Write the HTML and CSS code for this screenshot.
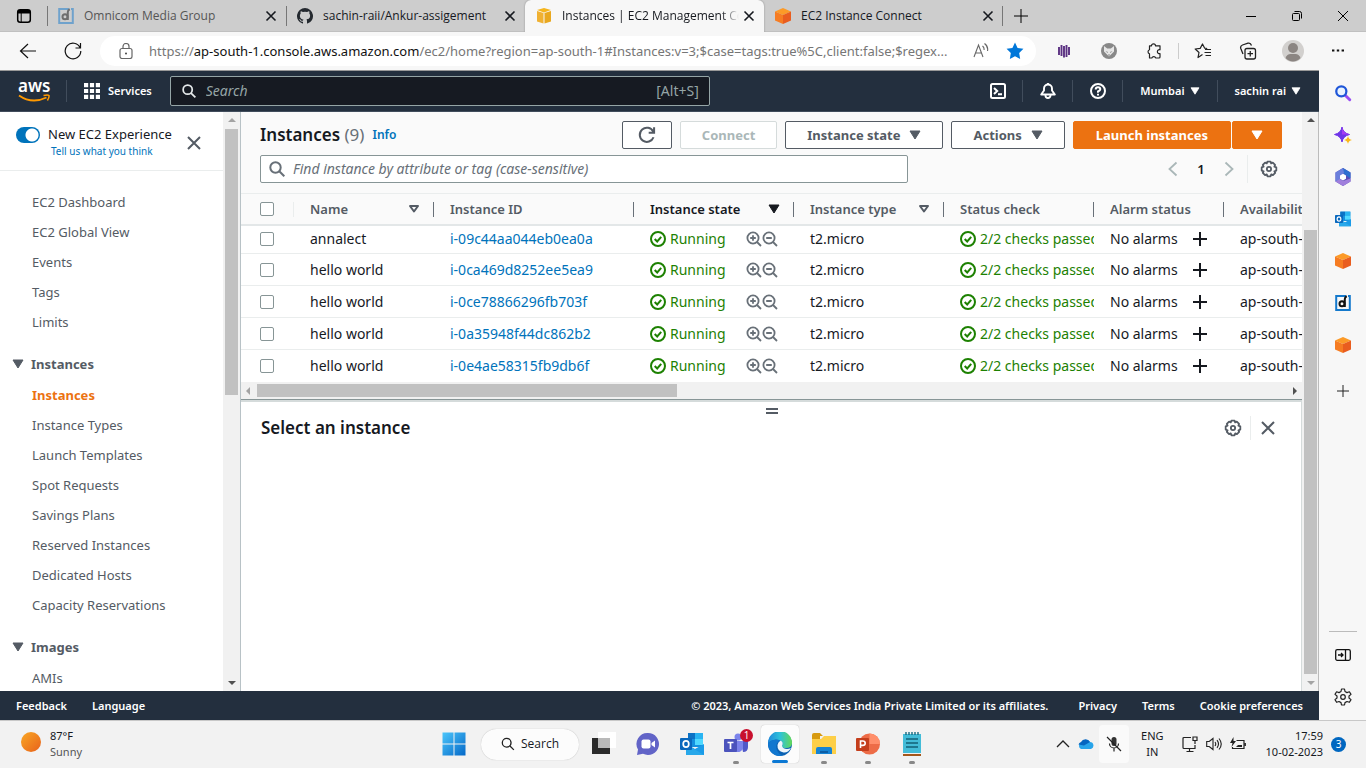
FILE: index.html
```html
<!DOCTYPE html>
<html lang="en">
<head>
<meta charset="utf-8">
<title>Instances | EC2 Management Console</title>
<link rel="stylesheet" href="styles.css">
</head>
<body>
<svg class="defs" aria-hidden="true">
  <symbol id="x" viewBox="0 0 16 16"><path d="M3.5 3.5l9 9M12.500 3.500l-9 9" fill="none" stroke="currentColor" stroke-width="1.600"/></symbol>
  <symbol id="close" viewBox="0 0 16 16"><path d="M2 2l12 12M14 2L2 14" fill="none" stroke="currentColor" stroke-width="2"/></symbol>
  <symbol id="down" viewBox="0 0 12 10"><path d="M1 1h10L6 9z" fill="currentColor" stroke="currentColor" stroke-linejoin="round"/></symbol>
  <symbol id="sort" viewBox="0 0 12 10"><path d="M2 2h8L6 7.500z" fill="none" stroke="currentColor" stroke-width="2" stroke-linejoin="round"/></symbol>
  <symbol id="search" viewBox="0 0 16 16"><circle cx="6.500" cy="6.500" r="5.200" fill="none" stroke="currentColor" stroke-width="2"/><path d="M10.300 10.300l5 5" stroke="currentColor" stroke-width="2"/></symbol>
  <symbol id="ok" viewBox="0 0 16 16"><g fill="none" stroke="currentColor" stroke-width="2"><circle cx="8" cy="8" r="7"/><path d="M4.700 8l2.500 2.500 4-4.600"/></g></symbol>
  <symbol id="zin" viewBox="0 0 16 16"><g fill="none" stroke="currentColor" stroke-width="1.800"><circle cx="7" cy="7" r="5.600"/><path d="M11 11l4 4M4.200 7h5.600M7 4.200v5.600"/></g></symbol>
  <symbol id="zout" viewBox="0 0 16 16"><g fill="none" stroke="currentColor" stroke-width="1.800"><circle cx="7" cy="7" r="5.600"/><path d="M11 11l4 4M4.200 7h5.600"/></g></symbol>
  <symbol id="plus" viewBox="0 0 16 16"><path d="M8 1v14M1 8h14" stroke="currentColor" stroke-width="2"/></symbol>
  <symbol id="gear" viewBox="0 0 16 16"><path d="M6.600 1h2.800l.5 1.600 1.500-.6 2 2-.6 1.500 1.700.6v2.900l-1.700.6.7 1.500-2 2-1.500-.7-.6 1.700H6.600L6 12.400l-1.500.7-2-2 .7-1.500L1.500 9V6.100l1.700-.6-.7-1.500 2-2 1.500.6z" transform="translate(0 .4)" fill="none" stroke="currentColor" stroke-width="1.600" stroke-linejoin="round"/><circle cx="8" cy="8" r="1.900" fill="none" stroke="currentColor" stroke-width="1.600"/></symbol>
  <symbol id="cube" viewBox="0 0 16 16"><path d="M8 0l8 3.600L8 7 0 3.600z" fill="#fc9a27"/><path d="M0 3.600L8 7v9l-8-3.600z" fill="#f67c22"/><path d="M16 3.600L8 7v9l8-3.600z" fill="#e95d1f"/></symbol>
  <symbol id="dlogo" viewBox="0 0 16 16"><path d="M11 1H1.200v14h13.600V1H13" fill="none" stroke="#1479cc" stroke-width="2"/><g fill="none" stroke="#111" stroke-width="2"><circle cx="7" cy="8.700" r="2.500"/><path d="M9.800 12V4q0-2 2-2.800"/></g></symbol>
  <symbol id="outlook" viewBox="0 0 24 24"><path d="M8 1h15v14H8z" fill="#1490df"/><path d="M8 1h7v6H8z" fill="#0c72c5"/><path d="M15 1h8v6h-8z" fill="#29b4f2"/><path d="M15 7h8v6h-8z" fill="#50d9ff"/><path d="M6 12l9 5 9-5v11H6z" fill="#1a9be8"/><path d="M6 12v11h18z" fill="#28a8ea"/><rect y="6" width="12" height="12" rx="1" fill="#0a68bd"/><ellipse cx="6" cy="12" rx="2.800" ry="3.200" fill="none" stroke="#fff" stroke-width="1.700"/></symbol>
</svg>

<header class="tabs">
  <button class="tab-menu" aria-label="Tab actions"><svg viewBox="0 0 16 16"><rect x="1.700" y="1.700" width="12.600" height="12.600" rx="2.500" fill="none" stroke="#000" stroke-width="1.500"/><path d="M2 2h12v3.500H2z"/><path d="M5.200 5v9" stroke="#000"/></svg></button>
  <div class="tab rule-left dim"><svg class="fav"><use href="#dlogo"/></svg><span>Omnicom Media Group</span><button aria-label="Close tab"><svg><use href="#x"/></svg></button></div>
  <div class="tab rule-left"><svg class="fav" viewBox="0 0 16 16"><path d="M8 0a8 8 0 0 0-2.500 15.600c.4.100.5-.2.500-.4v-1.500c-2.200.5-2.700-.9-2.700-.9-.4-.9-.9-1.200-.9-1.200-.7-.5.1-.5.100-.5.800.1 1.200.8 1.200.8.700 1.200 1.900.9 2.300.7.100-.5.300-.9.500-1.100-1.800-.2-3.600-.9-3.600-4 0-.9.300-1.600.8-2.100-.1-.2-.4-1 .1-2.100 0 0 .7-.2 2.200.8a7.500 7.500 0 0 1 4 0c1.500-1 2.200-.8 2.200-.8.400 1.100.2 1.900.1 2.100.5.600.8 1.300.8 2.100 0 3.100-1.900 3.700-3.700 3.900.3.300.6.800.6 1.500v2.300c0 .2.100.5.500.4A8 8 0 0 0 8 0z" fill="#24292f"/></svg><span>sachin-raii/Ankur-assigement</span><button aria-label="Close tab"><svg><use href="#x"/></svg></button></div>
  <div class="tab active"><svg class="fav" viewBox="0 0 16 16"><path d="M8 0l7 2-7 2.500L1 2z" fill="#f5b51d"/><path d="M1 3l6.500 2v10.500L1 13.500z" fill="#f0b132"/><path d="M15 3L8.500 5v10.500l6.500-2z" fill="#e9a81f"/></svg><span class="fade">Instances | EC2 Management Console</span><button aria-label="Close tab"><svg><use href="#x"/></svg></button></div>
  <div class="tab rule-right"><svg class="fav"><use href="#cube"/></svg><span>EC2 Instance Connect</span><button aria-label="Close tab"><svg><use href="#x"/></svg></button></div>
  <button class="new-tab" aria-label="New tab"><svg viewBox="0 0 16 16"><path d="M8 1v14M1 8h14" stroke="#000"/></svg></button>
  <div class="window-buttons">
    <button aria-label="Minimize"><svg viewBox="0 0 12 12"><path d="M1 6.500h10" stroke="#000"/></svg></button>
    <button aria-label="Restore"><svg viewBox="0 0 12 12"><g fill="none" stroke="#000"><rect x="1.500" y="3.500" width="7" height="7" rx="1"/><path d="M3.500 1.500h5a2 2 0 0 1 2 2v5"/></g></svg></button>
    <button aria-label="Close"><svg viewBox="0 0 12 12"><path d="M1 1l10 10M11 1L1 11" stroke="#000"/></svg></button>
  </div>
</header>

<div class="toolbar">
  <button aria-label="Back"><svg class="i18" viewBox="0 0 18 18"><path d="M17 9H1.500M9 2L1.500 9 9 16" fill="none" stroke="#111" stroke-width="1.200"/></svg></button>
  <button aria-label="Refresh"><svg class="i18" viewBox="0 0 18 18"><path d="M16 5.500A7.800 7.800 0 1 0 16.800 9M16.500 1v5H11.500" fill="none" stroke="#111" stroke-width="1.200"/></svg></button>
  <div class="address">
    <svg class="i16" viewBox="0 0 16 16"><g fill="none" stroke="#666" stroke-width="1.200"><rect x="2" y="5.500" width="12" height="10" rx="2"/><path d="M5 5.500V3.500a3 3 0 0 1 6 0v2"/></g><circle cx="8" cy="10.500" r="1" fill="#444"/></svg>
    <div class="url" role="textbox" aria-label="Address">https://<b>ap-south-1.console.aws.amazon.com</b>/ec2/home?region=ap-south-1#Instances:v=3;$case=tags:true%5C,client:false;$regex...</div>
    <svg class="i16" viewBox="0 0 16 16"><path d="M1 14L5.500 2 10 14M2.600 10h5.800M9.500 3q2 1.500 1.500 4M11.500.5q4 3 3 7.500" fill="none" stroke="#666" stroke-width="1.100"/></svg>
    <svg class="i18" viewBox="0 0 16 16"><path d="M8 .5l2.300 4.900 5.200.7-3.800 3.700.9 5.400L8 12.600l-4.600 2.600.9-5.400L.5 6.100l5.200-.7z" fill="#0077d9"/></svg>
  </div>
  <button aria-label="Voice extension"><svg class="i14" viewBox="0 0 14 14"><path d="M2 3v8M4.500 1v11M7 2v11.500M9.500 1v12M12 3v8" stroke="#5b3182" stroke-width="1.900"/></svg></button>
  <button aria-label="Fox extension"><svg class="i16" viewBox="0 0 16 16"><circle cx="8" cy="8" r="8" fill="#888"/><path d="M3 3l3.200 2.500h3.600L13 3v5.500L8 13.500 3 8.500z" fill="#e6e6e6"/><path d="M4.500 8l2.500 1-.5 1zM11.500 8L9 9l.5 1zM8 11l1 1-1 1-1-1z" fill="#888"/></svg></button>
  <button aria-label="Extensions"><svg class="i16" viewBox="0 0 16 16"><path d="M5.500 2.800a2 2 0 0 1 4 0H14v4a2 2 0 1 0 0 3.800V14a1 1 0 0 1-1 1H9.800a2.200 2.200 0 0 0-4 0H3.500V10.800a2.100 2.100 0 0 1 0-4v-4z" fill="none" stroke="#222" stroke-width="1.200" stroke-linejoin="round"/></svg></button>
  <i class="sep"></i>
  <button aria-label="Favorites"><svg class="i18" viewBox="0 0 18 16"><path d="M8.500 11.500L4 14.500l1-5L1.200 6l5-.6L8.500 1l2.200 4.200 2.500.3M11 6.500h6M10.500 9.500H17M11.500 12.500H17" fill="none" stroke="#222" stroke-width="1.200" stroke-linejoin="round"/></svg></button>
  <button aria-label="Collections"><svg class="i18" viewBox="0 0 18 18"><g fill="none" stroke="#222" stroke-width="1.300"><rect x="6" y="6.500" width="10.500" height="10.500" rx="2"/><path d="M11.250 9v5.500M8.500 11.700H14M4 12L1.800 6.500Q1 4 3.500 3L9 1.200q2.500-.7 3.500 2.300"/></g></svg></button>
  <button aria-label="Profile"><svg class="i22" viewBox="0 0 22 22"><circle cx="11" cy="11" r="11" fill="#d2d0ce"/><circle cx="11" cy="8" r="5" fill="#8b8582"/><path d="M3.500 18q1.500-4 5-4h5q3.500 0 5 4a10 10 0 0 1-15 0z" fill="#8b8582"/></svg></button>
  <button aria-label="More"><svg class="i14" viewBox="0 0 14 14"><path d="M1 6.500h2.400M5.800 6.500h2.400M10.600 6.500H13" stroke="#111" stroke-width="2"/></svg></button>
</div>

<div class="middle">
  <div class="console">
    <header class="aws-bar">
      <a class="aws-logo" href="#" aria-label="AWS home"><span>aws</span><svg viewBox="0 0 34 9"><path d="M1 1.500Q14 10.500 28.500 3.500" fill="none" stroke="#f90" stroke-width="1.900"/><path d="M25.500 1.500q4.500-1 5.500 0 .4 2-1.600 5" fill="none" stroke="#f90" stroke-width="1.500"/></svg></a>
      <button class="services"><svg class="i16" viewBox="0 0 16 16"><path d="M0 2.200h16M0 8h16M0 13.800h16" stroke="#fff" stroke-width="4.200" stroke-dasharray="4.200 1.700"/></svg>Services</button>
      <label class="aws-search"><svg class="i14"><use href="#search"/></svg><input type="search" placeholder="Search" aria-label="Search AWS"><span>[Alt+S]</span></label>
      <nav class="aws-tools">
        <button class="tool" aria-label="CloudShell"><svg class="i16" viewBox="0 0 16 16"><g fill="none" stroke="#fff" stroke-width="2"><rect x="1" y="1" width="14" height="14" rx="1.500"/><path d="M4 5l3.200 3L4 11M8 11.200h4"/></g></svg></button>
        <button class="tool" aria-label="Notifications"><svg class="i16" viewBox="0 0 16 16"><g fill="none" stroke="#fff" stroke-width="1.900" stroke-linejoin="round"><path d="M1.200 11.500L4 7.500V5.500a4 4 0 0 1 8 0v2l2.800 4zM8 0v2"/><path d="M5.500 12v.5a2.500 2.500 0 0 0 5 0V12"/></g></svg></button>
        <button class="tool" aria-label="Help"><svg class="i16" viewBox="0 0 16 16"><g fill="none" stroke="#fff" stroke-width="2"><circle cx="8" cy="8" r="7"/><path d="M5.700 6.500Q5.700 4.300 8 4.300T10.300 6.300Q10.300 7.500 8 8.500V9.700M8 10.800v1.700"/></g></svg></button>
        <button class="menu">Mumbai<svg class="caret"><use href="#down"/></svg></button>
        <button class="menu">sachin rai<svg class="caret"><use href="#down"/></svg></button>
      </nav>
    </header>

    <div class="aws-body">
      <aside class="side">
        <div class="promo">
          <input type="checkbox" role="switch" id="exp" checked>
          <div><label for="exp">New EC2 Experience</label><a href="#">Tell us what you think</a></div>
          <button aria-label="Close navigation"><svg class="i16"><use href="#close"/></svg></button>
        </div>
        <nav class="links">
          <ul>
            <li><a href="#">EC2 Dashboard</a></li><li><a href="#">EC2 Global View</a></li><li><a href="#">Events</a></li><li><a href="#">Tags</a></li><li><a href="#">Limits</a></li>
          </ul>
          <button class="group"><svg class="caret"><use href="#down"/></svg>Instances</button>
          <ul>
            <li><a class="current" href="#">Instances</a></li><li><a href="#">Instance Types</a></li><li><a href="#">Launch Templates</a></li><li><a href="#">Spot Requests</a></li><li><a href="#">Savings Plans</a></li><li><a href="#">Reserved Instances</a></li><li><a href="#">Dedicated Hosts</a></li><li><a href="#">Capacity Reservations</a></li>
          </ul>
          <button class="group"><svg class="caret"><use href="#down"/></svg>Images</button>
          <ul><li><a href="#">AMIs</a></li></ul>
        </nav>
      </aside>
      <div class="vbar"><i class="up faint"></i><b class="thumb side-thumb"></b><i class="down"></i></div>

      <main class="main">
        <section class="list">
          <div class="list-head">
            <div class="title-row">
              <h1>Instances <span>(9)</span></h1><a class="info" href="#">Info</a>
              <div class="actions">
                <button class="btn refresh" aria-label="Refresh list"><svg class="i18" viewBox="0 0 16 16"><path d="M13.800 10A6.300 6.300 0 1 1 13.500 5M14.300 1v5H9.500" fill="none" stroke="currentColor" stroke-width="1.800"/></svg></button>
                <button class="btn" disabled>Connect</button>
                <button class="btn">Instance state<svg class="caret"><use href="#down"/></svg></button>
                <button class="btn">Actions<svg class="caret"><use href="#down"/></svg></button>
                <div class="split"><button class="btn primary">Launch instances</button><button class="btn primary more" aria-label="More launch options"><svg class="caret"><use href="#down"/></svg></button></div>
              </div>
            </div>
            <div class="filter-row">
              <label class="find"><svg class="i16"><use href="#search"/></svg><input type="search" placeholder="Find instance by attribute or tag (case-sensitive)" aria-label="Find instance"></label>
              <div class="pager">
                <button aria-label="Previous page"><svg class="i16" viewBox="0 0 16 16"><path d="M11.500 1.500L4.500 8l7 6.500" fill="none" stroke="#aab7b8" stroke-width="1.800"/></svg></button>
                <button class="page">1</button>
                <button aria-label="Next page"><svg class="i16" viewBox="0 0 16 16"><path d="M4.500 1.500L11.500 8l-7 6.500" fill="none" stroke="#aab7b8" stroke-width="1.800"/></svg></button>
                <button class="prefs" aria-label="Preferences"><svg class="i18"><use href="#gear"/></svg></button>
              </div>
            </div>
          </div>
          <div class="table-wrap">
            <table>
              <colgroup><col class="c-check"><col class="c-name"><col class="c-id"><col class="c-state"><col class="c-type"><col class="c-status"><col class="c-alarm"><col class="c-zone"></colgroup>
              <thead><tr>
                <th><input type="checkbox" aria-label="Select all"></th>
                <th><div>Name<svg class="caret"><use href="#sort"/></svg></div></th>
                <th><div>Instance ID</div></th>
                <th class="sorted"><div>Instance state<svg class="caret"><use href="#down"/></svg></div></th>
                <th><div>Instance type<svg class="caret"><use href="#sort"/></svg></div></th>
                <th><div>Status check</div></th>
                <th><div>Alarm status</div></th>
                <th><div>Availability Zone</div></th>
              </tr></thead>
              <tbody>
                <tr><td><input type="checkbox" aria-label="Select annalect"></td><td>annalect</td><td><a href="#">i-09c44aa044eb0ea0a</a></td><td><div class="state"><svg><use href="#ok"/></svg>Running<span><svg><use href="#zin"/></svg><svg><use href="#zout"/></svg></span></div></td><td>t2.micro</td><td><div class="state"><svg><use href="#ok"/></svg>2/2 checks passed</div></td><td><div class="alarm">No alarms<svg><use href="#plus"/></svg></div></td><td>ap-south-1b</td></tr>
                <tr><td><input type="checkbox" aria-label="Select hello world 1"></td><td>hello world</td><td><a href="#">i-0ca469d8252ee5ea9</a></td><td><div class="state"><svg><use href="#ok"/></svg>Running<span><svg><use href="#zin"/></svg><svg><use href="#zout"/></svg></span></div></td><td>t2.micro</td><td><div class="state"><svg><use href="#ok"/></svg>2/2 checks passed</div></td><td><div class="alarm">No alarms<svg><use href="#plus"/></svg></div></td><td>ap-south-1b</td></tr>
                <tr><td><input type="checkbox" aria-label="Select hello world 2"></td><td>hello world</td><td><a href="#">i-0ce78866296fb703f</a></td><td><div class="state"><svg><use href="#ok"/></svg>Running<span><svg><use href="#zin"/></svg><svg><use href="#zout"/></svg></span></div></td><td>t2.micro</td><td><div class="state"><svg><use href="#ok"/></svg>2/2 checks passed</div></td><td><div class="alarm">No alarms<svg><use href="#plus"/></svg></div></td><td>ap-south-1b</td></tr>
                <tr><td><input type="checkbox" aria-label="Select hello world 3"></td><td>hello world</td><td><a href="#">i-0a35948f44dc862b2</a></td><td><div class="state"><svg><use href="#ok"/></svg>Running<span><svg><use href="#zin"/></svg><svg><use href="#zout"/></svg></span></div></td><td>t2.micro</td><td><div class="state"><svg><use href="#ok"/></svg>2/2 checks passed</div></td><td><div class="alarm">No alarms<svg><use href="#plus"/></svg></div></td><td>ap-south-1b</td></tr>
                <tr><td><input type="checkbox" aria-label="Select hello world 4"></td><td>hello world</td><td><a href="#">i-0e4ae58315fb9db6f</a></td><td><div class="state"><svg><use href="#ok"/></svg>Running<span><svg><use href="#zin"/></svg><svg><use href="#zout"/></svg></span></div></td><td>t2.micro</td><td><div class="state"><svg><use href="#ok"/></svg>2/2 checks passed</div></td><td><div class="alarm">No alarms<svg><use href="#plus"/></svg></div></td><td>ap-south-1b</td></tr>
              </tbody>
            </table>
          </div>
          <div class="hbar"><i class="left"></i><b class="thumb"></b><i class="right"></i></div>
        </section>
        <section class="detail">
          <div class="handle"></div>
          <div class="detail-head">
            <h2>Select an instance</h2>
            <button aria-label="Panel preferences"><svg class="i18"><use href="#gear"/></svg></button>
            <button class="shut" aria-label="Close panel"><svg class="i16"><use href="#close"/></svg></button>
          </div>
        </section>
      </main>
      <div class="vbar page-bar"><i class="up"></i><b class="thumb page-thumb"></b><i class="down faint"></i></div>
    </div>

    <footer class="aws-foot">
      <a href="#">Feedback</a><a href="#">Language</a>
      <span>© 2023, Amazon Web Services India Private Limited or its affiliates.</span>
      <a href="#">Privacy</a><a href="#">Terms</a><a href="#">Cookie preferences</a>
    </footer>
  </div>

  <aside class="edge-bar">
    <button aria-label="Search"><svg class="i18" viewBox="0 0 16 16"><path d="M9.500 9.500l4.500 4.500" stroke="#9a4df2" stroke-width="2.600" stroke-linecap="round"/><circle cx="6.500" cy="6.500" r="4.500" fill="#e9f4ff" stroke="#1f56d8" stroke-width="2"/></svg></button>
    <button aria-label="Discover"><svg class="i18" viewBox="0 0 18 18"><path d="M8 1q1 6 7.500 7.500Q9 10 8 16 7 10 .5 8.500 7 7 8 1z" fill="#6f35e8" stroke="#6f35e8"/><path d="M8 1q1 6 7.500 7.500H8z" fill="#a63df2"/><path d="M14 10q.6 3.300 4 4-3.400.7-4 4-.6-3.300-4-4 3.400-.7 4-4z" fill="#fbb91b"/></svg></button>
    <button aria-label="Microsoft 365"><svg class="i18" viewBox="0 0 18 18"><path d="M9 0l7.500 4.500v9L9 18l-7.500-4.500v-9z" fill="#5b4cb8"/><path d="M9 0l7.500 4.500v6L12 7.500 9 5 6 7z" fill="#2f6fd0"/><path d="M1.500 4.500L9 0l1 5-4 3v6l-4.500-.5z" fill="#6a7fdc"/><path d="M1.500 13.500L6 11l3 2 7.500-2.500v3L9 18z" fill="#a07fdc"/><path d="M9 5.800l3 1.800v3.200l-3 1.800-3-1.800V7.600z" fill="#fff"/></svg></button>
    <button aria-label="Outlook"><svg class="i16"><use href="#outlook"/></svg></button>
    <button aria-label="Cube app"><svg class="i16"><use href="#cube"/></svg></button>
    <button aria-label="Annalect"><svg class="i16"><use href="#dlogo"/></svg></button>
    <button aria-label="Cube app two"><svg class="i16"><use href="#cube"/></svg></button>
    <button class="add" aria-label="Add"><svg class="i14" viewBox="0 0 14 14"><path d="M7 1v12M1 7h12" stroke="#222"/></svg></button>
    <div class="edge-end">
      <button aria-label="Hide sidebar"><svg class="i16" viewBox="0 0 16 16"><g fill="none" stroke="#111" stroke-width="1.300"><rect x=".7" y="2.700" width="14.600" height="10.600" rx="1.500"/><path d="M10.500 3v10M3 8h5M6 6l2 2-2 2"/></g></svg></button>
      <button aria-label="Settings"><svg class="i18" viewBox="0 0 18 18"><path d="M7.500 1h3l.5 2.500 2 1.100 2.400-.8L17 6.400 15 8v2l2 1.600-1.600 2.700-2.400-.8-2 1.100-.5 2.400h-3L7 14.600l-2-1.100-2.400.8L1 11.600 3 10V8L1 6.400l1.600-2.600 2.400.8 2-1.100z" fill="none" stroke="#222" stroke-width="1.200" stroke-linejoin="round"/><circle cx="9" cy="9" r="2.300" fill="none" stroke="#222" stroke-width="1.200"/></svg></button>
    </div>
  </aside>
</div>

<footer class="taskbar">
  <div class="weather"><svg viewBox="0 0 22 22"><defs><linearGradient id="sun" x2="1" y2="1"><stop stop-color="#f9a825"/><stop offset="1" stop-color="#e8611a"/></linearGradient></defs><circle cx="11" cy="11" r="10" fill="url(#sun)"/></svg><p>87°F<span>Sunny</span></p></div>
  <nav class="apps">
    <button aria-label="Start"><svg viewBox="0 0 24 24"><defs><linearGradient id="win" x2="1" y2="1"><stop stop-color="#4cc6fb"/><stop offset="1" stop-color="#0468c8"/></linearGradient></defs><path d="M.5.5h11v11H.5zM12.500.5h11v11h-11zM.5 12.500h11v11H.5zM12.500 12.500h11v11h-11z" fill="url(#win)"/></svg></button>
    <button class="win-search"><svg viewBox="0 0 16 16"><circle cx="6.500" cy="6.500" r="5" fill="none" stroke="#222" stroke-width="1.500"/><path d="M10.200 10.200l4.500 4.500" stroke="#222" stroke-width="1.500"/></svg>Search</button>
    <button aria-label="Task view"><svg viewBox="0 0 24 24"><path d="M0 6h18v16H0z" fill="#2b2b2b"/><path d="M6 0h18v16H6z" fill="#fff"/><path d="M6 6h12v10H6z" fill="#b9b9b9"/></svg></button>
    <button aria-label="Chat"><svg viewBox="0 0 24 24"><path d="M12 1a11 11 0 1 1-5 20.800L1 23l1-5.500A11 11 0 0 1 12 1z" fill="#6264c7"/><rect x="5.500" y="7.500" width="9" height="9" rx="2" fill="#fff"/><path d="M15.500 11l3.500-2.500v7L15.500 13z" fill="#fff"/></svg></button>
    <button aria-label="Outlook"><svg><use href="#outlook"/></svg></button>
    <button class="open" aria-label="Teams"><svg viewBox="0 0 24 24"><circle cx="14" cy="5" r="3.500" fill="#7b83eb"/><path d="M17 9h7v6q0 5-5 5z" fill="#5059c9"/><path d="M8 9h11v7.500a6 6 0 0 1-11 0z" fill="#7b83eb"/><rect y="7" width="13" height="13" rx="1" fill="#4b53bc"/><path d="M3.500 10.500h6M6.500 10.500v6.500" stroke="#fff" stroke-width="1.700"/></svg><em>1</em></button>
    <button class="open on" aria-label="Edge"><svg viewBox="0 0 24 24"><defs><linearGradient id="e1" x2="1"><stop stop-color="#2089dc"/><stop offset=".5" stop-color="#2fc2d9"/><stop offset="1" stop-color="#63d957"/></linearGradient></defs><circle cx="12" cy="12" r="12" fill="#0b62b3"/><path d="M0 11A12 12 0 0 1 24 11q0 5-6 5-4 0-4-2 2-4-1.500-5.500Q6 5.500 0 11z" fill="url(#e1)"/><path d="M14 14q1 3 5 3 2 0 4-1-3 5-7.500 4.500Q9 19 9.500 13q.5-3 3-4.500Q16 10 14 14z" fill="#eef6fc"/><path d="M0 11q5-5 12.500-2.500Q7 11 8.500 17q1.500 5 6.500 6.600A12 12 0 0 1 0 11z" fill="#1177cf"/></svg></button>
    <button class="open" aria-label="File Explorer"><svg viewBox="0 0 24 24"><path d="M0 3q0-2 2-2h6l3 3h-3v5H0z" fill="#d79a10"/><path d="M0 7h9l3-3h12v18H0z" fill="#fdcf48"/><path d="M4 22v-5q0-2 2-2h12q2 0 2 2v5z" fill="#1583d4"/><path d="M8 19h8v2H8z" fill="#0c5da5"/></svg></button>
    <button class="open" aria-label="PowerPoint"><svg viewBox="0 0 24 24"><circle cx="13.500" cy="12" r="10.500" fill="#ed6c47"/><path d="M13.500 1.500A10.500 10.500 0 0 1 24 12H13.500z" fill="#ff8f6b"/><rect y="6" width="13" height="13" rx="1" fill="#c43e1c"/><path d="M4.500 16V9h2.300q2.400 0 2.400 2.200T6.800 13.400H4.500" fill="none" stroke="#fff" stroke-width="1.600"/></svg></button>
    <button class="open" aria-label="Notepad"><svg viewBox="0 0 24 24"><path d="M3 2h18v19H3z" fill="#43bcd8"/><path d="M6 0v3M9 0v3M12 0v3M15 0v3M18 0v3" stroke="#176a80" stroke-width="1.400"/><path d="M6 7h12M6 11h12M6 15h12" stroke="#136077" stroke-width="1.500"/><path d="M3 22h18v2H3z" fill="#a4571b"/></svg></button>
  </nav>
  <div class="tray">
    <svg class="i14" viewBox="0 0 14 14"><path d="M1 10l6-6 6 6" fill="none" stroke="#222" stroke-width="1.300"/></svg>
    <svg class="i16" viewBox="0 0 16 16"><path d="M3 13a3.500 3.500 0 0 1 .5-6.500A5 5 0 0 1 12 6a3.600 3.600 0 0 1 1 7z" fill="#28a4ea"/><path d="M.5 8.500A4 4 0 0 1 3 6a5 5 0 0 1 9 0L6 9.500z" fill="#0565c0"/></svg>
    <div class="mic"><svg class="i16" viewBox="0 0 16 16"><rect x="5.500" y="1" width="5" height="9" rx="2.500" fill="#333"/><path d="M3.500 7.500a4.500 4.500 0 0 0 9 0M8 12v3.500M1 1l14 14" fill="none" stroke="#222" stroke-width="1.200"/></svg></div>
    <p class="lang">ENG<br>IN</p>
    <svg class="i16" viewBox="0 0 16 16"><path d="M9 1.500H2q-1 0-1 1v9q0 1 1 1h11V9M4.500 15.500h7M7.500 12.500v3M11 1h4v3.500h-4zM13 4.500V8" fill="none" stroke="#222" stroke-width="1.200"/></svg>
    <svg class="i16" viewBox="0 0 16 16"><path d="M.7 5.500v5h2.500L7 13.500v-11L3.200 5.500zM9 6q1.500 2 0 4M11 4.200q3 3.800 0 7.600M13 2.500q4.500 5.500 0 11" fill="none" stroke="#222" stroke-width="1.100"/></svg>
    <svg class="i16" viewBox="0 0 16 16"><path d="M6.500 4.500H14v8H2.500V11M15.300 7v3" fill="none" stroke="#222" stroke-width="1.200"/><path d="M8 9h4v2H6z" fill="#222"/><path d="M3.500 1L0 7h2.500L1.500 11 6 5H3.500z" fill="#222"/></svg>
    <p class="clock">17:59<br>10-02-2023</p>
    <span class="count">3</span>
  </div>
</footer>
</body>
</html>
```

FILE: styles.css
```css
* { box-sizing: border-box; }
body {
  margin: 0;
  height: 100vh;
  display: flex;
  flex-direction: column;
  overflow: hidden;
  font: 13px/20px "Noto Sans", "Open Sans", sans-serif;
  color: #16191f;
  background: #fff;
}
button, input { font: inherit; color: inherit; }
button { padding: 0; border: 0; background: none; display: flex; align-items: center; justify-content: center; }
a { color: #0073bb; text-decoration: none; }
h1, h2, p, ul { margin: 0; padding: 0; }
ul { list-style: none; }
svg { display: block; flex: none; }
.defs { width: 0; height: 0; position: absolute; }
.i14 { width: 14px; height: 14px; }
.i16 { width: 16px; height: 16px; }
.i18 { width: 18px; height: 18px; }
.i22 { width: 22px; height: 22px; }
.caret { width: 12px; height: 10px; }

/* Browser tabs */
.tabs { flex: none; height: 32px; display: flex; background: #cdcdcd; font-family: "Open Sans", sans-serif; font-size: 12px; box-shadow: inset 0 -1px #c0c0c0; }
.tab-menu { width: 47px; }
.tab-menu svg { width: 16px; height: 16px; }
.tab { flex: 0 1 239px; min-width: 0; display: flex; align-items: center; padding: 0 7px 0 11px; position: relative; }
.tab .fav { width: 16px; height: 16px; margin-right: 10px; }
.tab > span { flex: 1; overflow: hidden; white-space: nowrap; }
.tab button, .tab button svg { width: 16px; height: 16px; }
.tab.dim > span { color: #555; }
.tab.dim .fav { opacity: .5; }
.rule-left { background: linear-gradient(#777, #777) 0 6px / 1px 20px no-repeat; }
.rule-right { background: linear-gradient(#777, #777) right 6px / 1px 20px no-repeat; }
.tab.active { background: #f7f7f7; border-radius: 6px 6px 0 0; box-shadow: 0 0 2px #888; }
.tab .fade { -webkit-mask-image: linear-gradient(90deg, #000 90%, transparent); mask-image: linear-gradient(90deg, #000 90%, transparent); margin-right: 2px; }
.new-tab { width: 36px; }
.new-tab svg { width: 16px; height: 16px; }
.window-buttons { margin-left: auto; display: flex; }
.window-buttons button { width: 46px; }
.window-buttons svg { width: 12px; height: 12px; }

/* Address row */
.toolbar { flex: none; height: 38px; display: flex; align-items: center; gap: 1px; padding: 0 6px; background: #f7f7f7; position: relative; }
.toolbar > button { flex: none; width: 44px; height: 32px; }
.toolbar .sep { width: 1px; height: 16px; margin: 0 1px; background: #ccc; }
.address { flex: 1; min-width: 0; height: 30px; margin: 0 5px 0 4px; padding: 0 12px 0 18px; display: flex; align-items: center; gap: 17px; border-radius: 15px; background: #fff; }
.url { flex: 1; min-width: 0; overflow: hidden; white-space: nowrap; color: #767676; margin: 0 -4px 0 -2px; }
.url b { font-weight: 400; color: #111; }

.middle { flex: 1; min-height: 0; display: flex; }
.console { flex: 1; min-width: 0; display: flex; flex-direction: column; border-top: 1px solid #999; }

/* AWS header */
.aws-bar { flex: none; height: 41px; display: flex; align-items: center; padding: 0 1px 0 18px; background: #232f3e; color: #fff; font-size: 11px; font-weight: 600; border-bottom: 1px solid #414d5c; }
.aws-logo { width: 49px; height: 22px; border-right: 1px solid #414d5c; color: #fff; font-size: 17px; line-height: 12px; }
.aws-logo span { display: block; height: 14px; }
.aws-logo svg { width: 34px; height: 9px; }
.services { gap: 8px; margin-left: 17px; }
.aws-search { flex: 0 1 540px; height: 30px; margin-left: 18px; padding: 0 10px 0 11px; display: flex; align-items: center; gap: 10px; border: 1px solid #95a5a6; border-radius: 2px; background: #161a22; font-size: 14px; font-weight: 400; color: #95a5a6; }
.aws-search .i14 { color: #e5e9ea; }
.aws-search input { flex: 1; min-width: 0; border: 0; background: none; outline: 0; padding: 0; }
input::placeholder { color: inherit; font-style: italic; opacity: 1; }
.aws-tools { margin-left: auto; display: flex; }
.aws-tools button { height: 22px; border-right: 1px solid #414d5c; }
.aws-tools .tool { width: 50px; }
.aws-tools .menu { padding: 0 17px; gap: 5px; }
.aws-tools .menu:last-child { border: 0; }
.menu .caret { width: 10px; height: 8px; }

.aws-body { flex: 1; min-height: 0; display: flex; }

/* Side navigation */
.side { flex: none; width: 223px; overflow: hidden; color: #545b64; }
.promo { height: 59px; padding: 0 21px 0 16px; display: flex; align-items: center; border-bottom: 1px solid #eaeded; }
.promo input { appearance: none; flex: none; width: 24px; height: 16px; margin: 0 8px 12px 0; border-radius: 8px; background: radial-gradient(circle at 16px 8px, #fff 6px, #0073bb 7px); }
.promo label { display: block; padding-top: 2px; line-height: 18px; color: #16191f; white-space: nowrap; }
.promo div a { display: block; padding-left: 3px; font-size: 10px; line-height: 16px; }
.promo button { margin: 4px 0 0 auto; color: #545b64; }
.links { padding-top: 16px; }
.links li a { display: block; padding-left: 32px; line-height: 30px; color: #545b64; }
.links li .current { color: #ec7211; font-weight: 700; }
.group { padding: 14px 0 3px 12px; height: 43px; gap: 7px; font-weight: 700; }

/* Scroll tracks */
.vbar { flex: none; width: 17px; padding: 6px 2px; display: flex; flex-direction: column; align-items: center; background: #f1f1f1; }
.vbar i, .hbar i { width: 0; height: 0; border: 4px solid transparent; }
.vbar .up { border-bottom-color: #505050; border-top: 0; }
.vbar .down { border-top-color: #505050; border-bottom: 0; margin-top: auto; }
.vbar .faint.up { border-bottom-color: #a3a3a3; }
.vbar .faint.down { border-top-color: #a3a3a3; }
.thumb { background: #c1c1c1; }
.vbar .thumb { width: 13px; }
.side-thumb { height: 47%; margin-top: 7px; }
.page-thumb { flex: 1; margin: 108px 0 7px; }
.page-bar { border-right: 1px solid #bbb; padding: 6px 1px 6px 2px; }
.hbar { height: 17px; padding: 0 5px; display: flex; align-items: center; background: #f1f1f1; }
.hbar .left { border-right-color: #a3a3a3; border-left: 0; }
.hbar .right { border-left-color: #505050; border-right: 0; margin-left: auto; }
.hbar .thumb { width: 40%; height: 13px; margin-left: 7px; }

/* Instance list */
.main { flex: 1; min-width: 0; display: flex; flex-direction: column; border-left: 1px solid #b8c2c6; }
.list-head { padding: 9px 20px 10px 19px; display: grid; gap: 6px; background: #fafafa; }
.title-row { display: flex; align-items: center; height: 28px; }
h1 { font-size: 17px; font-weight: 600; line-height: 24px; }
h1 span { font-weight: 400; color: #687078; }
.info { margin-left: 8px; font-size: 12px; font-weight: 600; }
.actions { margin-left: auto; display: flex; gap: 8px; }
.btn { height: 28px; padding: 0 21px; gap: 9px; border: 1px solid #545b64; border-radius: 2px; background: #fff; color: #545b64; font-weight: 700; white-space: nowrap; }
.btn:disabled { border-color: #d5dbdb; color: #aab7b8; }
.btn.primary { padding: 0 22px; border-color: #ec7211; background: #ec7211; color: #fff; }
.btn.refresh, .btn.more { width: 50px; padding: 0; }
.split { display: flex; gap: 1px; }
.filter-row { display: flex; align-items: center; justify-content: space-between; }
.find { flex: 0 1 648px; height: 28px; padding: 0 8px; display: flex; align-items: center; gap: 8px; border: 1px solid #879596; border-radius: 2px; background: #fff; color: #687078; font-size: 14px; }
.find input { flex: 1; min-width: 0; border: 0; outline: 0; padding: 0; background: none; }
.pager { display: flex; align-items: center; color: #16191f; font-weight: 600; }
.pager button { width: 28px; height: 28px; }
.pager .prefs { width: 35px; margin-left: 4px; padding-left: 8px; border-left: 1px solid #eaeded; color: #545b64; }
.table-wrap { overflow: hidden; border-top: 1px solid #eaeded; }
table { width: 1153px; table-layout: fixed; border-collapse: separate; border-spacing: 0; }
.c-check { width: 53px; } .c-name { width: 140px; } .c-id { width: 200px; } .c-state { width: 160px; }
.c-type, .c-status { width: 150px; } .c-alarm { width: 130px; } .c-zone { width: 170px; }
th, td { padding: 0 0 0 16px; text-align: left; white-space: nowrap; overflow: hidden; }
th { height: 32px; background: linear-gradient(#687078, #687078) right 8px / 1px 15px no-repeat #fafafa; color: #545b64; font-weight: 600; border-bottom: 2px solid #e3e7e8; }
th:first-child { background-image: linear-gradient(#eaeded, #eaeded); }
th.sorted { color: #16191f; }
th div { display: flex; align-items: center; justify-content: space-between; padding-right: 14px; }
td { height: 32px; border-bottom: 1px solid #eaeded; font-size: 14px; }
tbody tr:first-child td { height: 28px; padding-bottom: 2px; }
tbody tr:last-child td { border-bottom-color: #fff; }
th:first-child, td:first-child { padding-left: 19px; }
table input { appearance: none; display: block; width: 14px; height: 14px; margin: 0; border: 1px solid #879596; border-radius: 2px; background: #fff; }
.state { display: flex; align-items: center; gap: 4px; color: #1d8102; }
.state svg { width: 16px; height: 16px; }
.state span { margin-left: auto; padding-right: 16px; display: flex; color: #687078; }
.alarm { display: flex; align-items: center; justify-content: space-between; padding-right: 16px; }
.alarm svg { width: 16px; height: 16px; }

/* Detail panel */
.detail { flex: 1; border-top: 1px solid #879596; box-shadow: inset 0 2px #d5dbdb, inset -1px 0 #d5dbdb; }
.handle { width: 12px; height: 6px; margin: 8px auto 0; border: solid #545b64; border-width: 2px 0; }
.detail-head { display: flex; align-items: center; padding: 0 18px 0 20px; color: #545b64; }
h2 { margin-right: auto; font-size: 17px; line-height: 28px; font-weight: 600; color: #16191f; }
.detail-head button { width: 34px; height: 24px; }
.detail-head .shut { border-left: 1px solid #eaeded; }

.aws-foot { flex: none; height: 29px; padding: 0 16px; display: flex; align-items: center; gap: 25px; background: #232f3e; color: #fff; font-size: 11px; font-weight: 600; white-space: nowrap; }
.aws-foot a { color: inherit; }
.aws-foot span { margin-left: auto; margin-right: 5px; }

/* Browser side bar */
.edge-bar { flex: none; width: 47px; padding: 2px 0; display: flex; flex-direction: column; background: #f7f7f7; }
.edge-bar button { width: 100%; height: 42px; }
.edge-bar .add { height: 50px; }
.edge-end { margin-top: auto; padding-top: 3px; background: linear-gradient(#bbb, #bbb) center top / 28px 1px no-repeat; }

/* Windows taskbar */
.taskbar { flex: none; height: 48px; display: grid; grid-template-columns: 1fr auto 1fr; align-items: center; background: #f2f2f2; box-shadow: inset 0 1px #c8c8c8; font-size: 11px; line-height: 16px; }
.weather { display: flex; gap: 8px; padding-left: 20px; }
.weather svg { width: 22px; height: 22px; margin-top: 3px; }
.weather span { display: block; color: #555; }
.apps { display: flex; align-items: center; }
.apps button { width: 44px; height: 44px; position: relative; }
.apps svg { width: 24px; height: 24px; }
.apps .win-search { width: 98px; height: 31px; margin: 0 3px 0 5px; gap: 6px; border-radius: 16px; background: #fcfcfc; box-shadow: 0 0 1px #aaa; font-size: 12px; font-family: "Open Sans", sans-serif; }
.apps .win-search svg { width: 14px; height: 14px; }
.apps .open::after { content: ""; position: absolute; left: 19px; bottom: 2px; width: 6px; height: 3px; border-radius: 2px; background: #888; }
.apps .on { width: 38px; height: 38px; margin: 0 3px; border-radius: 4px; background: #fcfcfc; box-shadow: 0 0 1px #aaa; }
.apps .on::after { left: 11px; bottom: 0; width: 16px; background: #0b78d4; }
.apps em { position: absolute; top: 7px; right: 5px; width: 13px; height: 13px; border-radius: 50%; background: #c8102e; color: #fff; font: 10px/13px "Open Sans", sans-serif; text-align: center; }
.tray { justify-self: end; display: flex; align-items: center; gap: 8px; padding-right: 20px; text-align: right; }
.mic { width: 30px; height: 38px; margin-left: -3px; display: flex; align-items: center; justify-content: center; border-radius: 4px; background: #fafafa; }
.lang { margin: 0 10px 0 4px; text-align: center; }
.clock { margin-left: 12px; }
.count { width: 15px; height: 15px; border-radius: 50%; background: #0067c0; color: #fff; font-size: 10px; line-height: 15px; text-align: center; }
```
